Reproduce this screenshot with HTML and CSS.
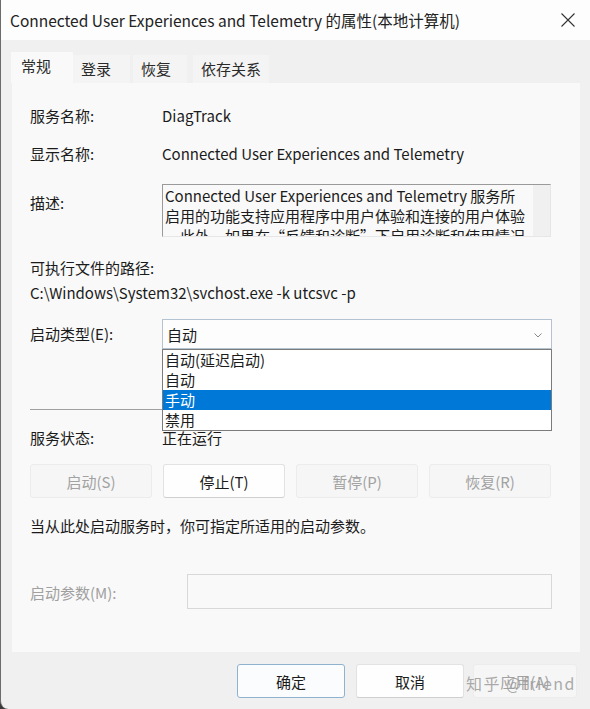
FILE: index.html
```html
<!DOCTYPE html>
<html lang="zh-CN">
<head>
  <meta charset="UTF-8">
  <title>Connected User Experiences and Telemetry 的属性(本地计算机)</title>
  <link rel="stylesheet" href="styles.css">
</head>
<body>
  <div class="window">
    <div class="titlebar">
      <span class="title">Connected User Experiences and Telemetry 的属性(本地计算机)</span>
      <svg class="close" width="16" height="16" viewBox="0 0 16 16">
        <path d="M1.5 1.5 L14.5 14.5 M14.5 1.5 L1.5 14.5" stroke="#333" stroke-width="1.1" fill="none"/>
      </svg>
    </div>

    <div class="body">
      <div class="tabs">
        <div class="tab active">常规</div>
        <div class="tab">登录</div>
        <div class="tab">恢复</div>
        <div class="tab">依存关系</div>
      </div>

      <div class="panel">
        <div class="row r1">
          <div class="label">服务名称:</div>
          <div class="value">DiagTrack</div>
        </div>
        <div class="row r2">
          <div class="label">显示名称:</div>
          <div class="value">Connected User Experiences and Telemetry</div>
        </div>
        <div class="row r3">
          <div class="label desc-label">描述:</div>
          <div class="desc">
            <div class="desc-text">Connected User Experiences and Telemetry 服务所启用的功能支持应用程序中用户体验和连接的用户体验。此外，如果在“反馈和诊断”下启用诊断和使用情况隐私选项设置</div>
            <div class="scroll"></div>
          </div>
        </div>
        <div class="path-label">可执行文件的路径:</div>
        <div class="path">C:\Windows\System32\svchost.exe -k utcsvc -p</div>

        <div class="row r4">
          <div class="label">启动类型(E):</div>
          <div class="select">
            <span>自动</span>
            <svg class="chev" width="8" height="5" viewBox="0 0 8 5">
              <path d="M0.5 0.5 L4 4 L7.5 0.5" stroke="#888" stroke-width="1" fill="none"/>
            </svg>
            <ul class="options">
              <li>自动(延迟启动)</li>
              <li>自动</li>
              <li class="sel">手动</li>
              <li>禁用</li>
            </ul>
          </div>
        </div>

        <div class="sep"></div>

        <div class="row r5">
          <div class="label">服务状态:</div>
          <div class="value">正在运行</div>
        </div>

        <div class="actions">
          <button class="btn off">启动(S)</button>
          <button class="btn">停止(T)</button>
          <button class="btn off">暂停(P)</button>
          <button class="btn off">恢复(R)</button>
        </div>

        <p class="note">当从此处启动服务时，你可指定所适用的启动参数。</p>

        <div class="row r6">
          <div class="label param-label">启动参数(M):</div>
          <div class="param"></div>
        </div>
      </div>

      <div class="footer">
        <button class="btn fbtn default">确定</button>
        <button class="btn fbtn cancel">取消</button>
        <button class="btn fbtn apply off">应用(A)</button>
        <span class="mark">知乎 @friend</span>
      </div>
    </div>
  </div>
</body>
</html>
```

FILE: styles.css
```css
* {
  box-sizing: border-box;
}

body {
  margin: 0;
  background: #3a3a3a;
  font-family: "Noto Sans CJK SC", "Noto Sans", sans-serif;
  font-size: 15px;
  color: #1b1b1b;
}

.window {
  width: 590px;
  height: 709px;
  background: #f0f0f0;
  border-left: 1px solid #6c6c6c;
  border-bottom-left-radius: 8px;
  overflow: hidden;
}

.titlebar {
  height: 40px;
  background: #fdfdfd;
  display: flex;
  align-items: center;
  justify-content: space-between;
  padding: 0 14px 0 9px;
}

.title {
  font-size: 15.5px;
  color: #222;
}

.body {
  padding: 12px 10px 0 10px;
}

/* tabs */
.tabs {
  display: flex;
  height: 31px;
  align-items: flex-end;
}

.tab {
  height: 28px;
  line-height: 28px;
  padding: 0 8px;
  background: #f4f4f4;
  color: #2a2a2a;
}

.tab.active {
  width: 62px;
  height: 31px;
  padding: 0 10px;
  background: #f9f9f9;
}

.tab:nth-child(2) {
  width: 57px;
}

.tab:nth-child(3) {
  width: 54px;
  margin-left: 3px;
}

.tab:nth-child(4) {
  margin-left: 6px;
}

/* general panel */
.panel {
  background: #f9f9f9;
  margin: 0 0 0 1px;
  width: 568px;
  padding: 23px 0 43px 18px;
}

.row {
  display: flex;
  align-items: center;
}

.label {
  width: 132px;
  flex: none;
  line-height: 20px;
}

.value {
  line-height: 20px;
}

.r2 {
  margin-top: 18px;
}

.r3 {
  margin-top: 20px;
  align-items: flex-start;
}

.desc-label {
  padding-top: 9px;
}

.desc {
  width: 389px;
  height: 53px;
  border-top: 1px solid #9a9a9a;
  border-left: 1px solid #9a9a9a;
  border-right: 1px solid #e6e6e6;
  border-bottom: 1px solid #e6e6e6;
  display: flex;
  justify-content: space-between;
  overflow: hidden;
}

.desc-text {
  flex: none;
  width: 363px;
  padding: 1px 0 0 2px;
  line-height: 20px;
  line-break: anywhere;
}

.scroll {
  width: 17px;
  flex: none;
  background: #f0f0f0;
}

.path-label {
  margin-top: 21px;
  line-height: 20px;
}

.path {
  margin-top: 5px;
  line-height: 20px;
}

.r4 {
  margin-top: 16px;
}

.select {
  position: relative;
  width: 390px;
  height: 30px;
  background: #fdfdfd;
  border: 1px solid #b4c3d1;
  display: flex;
  align-items: center;
  justify-content: space-between;
  padding: 0 9px 0 4px;
}

.chev {
  margin-top: 2px;
}

.options {
  position: absolute;
  left: -1px;
  top: 29px;
  width: 390px;
  margin: 0;
  padding: 0;
  list-style: none;
  background: #fff;
  border: 1px solid #7b7b7b;
  z-index: 2;
}

.options li {
  height: 20px;
  line-height: 20px;
  padding-left: 2px;
}

.options li.sel {
  background: #0078d7;
  color: #fff;
}

.sep {
  margin-top: 60px;
  width: 522px;
  height: 1px;
  background: #a0a0a0;
}

.r5 {
  margin-top: 18px;
}

.actions {
  margin-top: 16px;
  width: 521px;
  display: grid;
  grid-template-columns: repeat(4, 1fr);
  gap: 11px;
}

.btn {
  height: 34px;
  font-family: inherit;
  font-size: 15px;
  color: #1b1b1b;
  background: #fefefe;
  border: 1px solid #e2e2e2;
  border-bottom-color: #cfcfcf;
  border-radius: 3px;
}

.btn.off {
  background: #f6f6f6;
  border-color: #ececec;
  color: #a2a2a2;
}

.note {
  margin: 18px 0 0 0;
  line-height: 20px;
}

.r6 {
  margin-top: 38px;
}

.param-label {
  width: 157px;
  color: #a0a0a0;
  padding-top: 3px;
}

.param {
  width: 365px;
  height: 35px;
  border: 1px solid #d8d8d8;
  background: #f9f9f9;
}

/* dialog buttons */
.footer {
  position: relative;
  display: flex;
  justify-content: flex-end;
  margin-top: 12px;
  padding-right: 3px;
}

.fbtn {
  width: 108px;
}

.fbtn.default {
  border: 1px solid #8fb2cf;
  background: #fbfcfd;
}

.fbtn.cancel {
  margin-left: 11px;
}

.fbtn.apply {
  width: 104px;
  margin-left: 9px;
}

.mark {
  position: absolute;
  right: 4px;
  top: 7px;
  font-size: 16px;
  color: rgba(155, 155, 155, 0.85);
  letter-spacing: 1.5px;
}
```
